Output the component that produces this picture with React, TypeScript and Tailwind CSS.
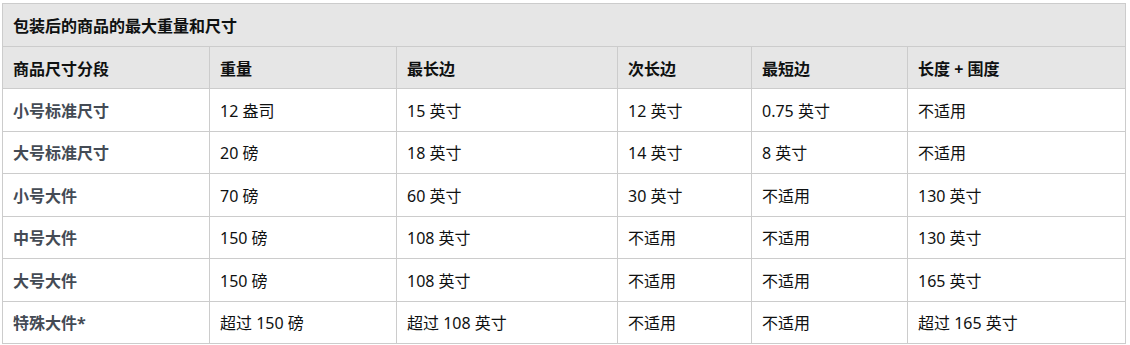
import React from "react";

const rows: string[][] = [
  ["小号标准尺寸", "12 盎司", "15 英寸", "12 英寸", "0.75 英寸", "不适用"],
  ["大号标准尺寸", "20 磅", "18 英寸", "14 英寸", "8 英寸", "不适用"],
  ["小号大件", "70 磅", "60 英寸", "30 英寸", "不适用", "130 英寸"],
  ["中号大件", "150 磅", "108 英寸", "不适用", "不适用", "130 英寸"],
  ["大号大件", "150 磅", "108 英寸", "不适用", "不适用", "165 英寸"],
  ["特殊大件*", "超过 150 磅", "超过 108 英寸", "不适用", "不适用", "超过 165 英寸"],
];

const headers = ["商品尺寸分段", "重量", "最长边", "次长边", "最短边", "长度 + 围度"];
const widths = [207, 187, 221, 134, 156, 218];

export default function App() {
  return (
    <div
      className="pl-[2px] pt-[3px] bg-white w-[1130px] h-[345px]"
      style={{ fontFamily: '"Noto Sans", "Noto Sans CJK SC", sans-serif' }}
    >
      <table className="border-collapse table-fixed w-[1123px] text-[16px] text-[#0f1111]">
        <colgroup>
          {widths.map((w, i) => (
            <col key={i} style={{ width: w }} />
          ))}
        </colgroup>
        <tbody>
          <tr className="h-[43px] bg-[#e6e6e6]">
            <td colSpan={6} className="border border-[#cccccc] px-[10px] pt-[2px] font-bold leading-none">
              包装后的商品的最大重量和尺寸
            </td>
          </tr>
          <tr className="h-[42px] bg-[#e6e6e6]">
            {headers.map((h, i) => (
              <td key={i} className="border border-[#cccccc] px-[10px] pt-[2px] font-bold leading-none">
                {h}
              </td>
            ))}
          </tr>
          {rows.map((r, ri) => (
            <tr key={ri} className="h-[42.5px]">
              {r.map((c, ci) => (
                <td
                  key={ci}
                  className={
                    ci === 0
                      ? "border border-[#cccccc] px-[10px] pt-[2px] font-bold text-[#444b55] leading-none"
                      : "border border-[#cccccc] px-[10px] pt-[2px] leading-none"
                  }
                >
                  {c}
                </td>
              ))}
            </tr>
          ))}
        </tbody>
      </table>
    </div>
  );
}
